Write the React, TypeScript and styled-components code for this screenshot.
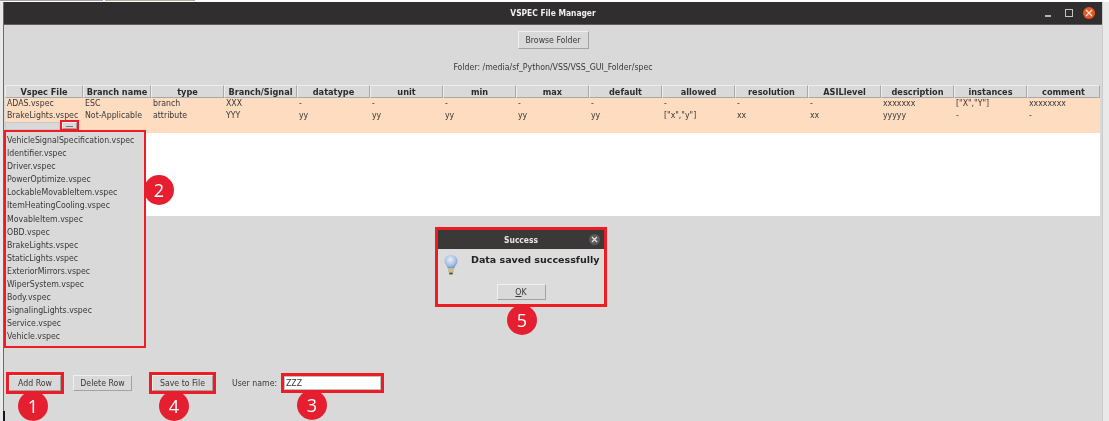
import styled, { createGlobalStyle } from 'styled-components'

const COLUMNS = [
  'Vspec File', 'Branch name', 'type', 'Branch/Signal', 'datatype', 'unit', 'min', 'max',
  'default', 'allowed', 'resolution', 'ASILlevel', 'description', 'instances', 'comment',
]

const ROWS = [
  ['ADAS.vspec', 'ESC', 'branch', 'XXX', '-', '-', '-', '-', '-', '-', '-', '-', 'xxxxxxx', '["X","Y"]', 'xxxxxxxx'],
  ['BrakeLights.vspec', 'Not-Applicable', 'attribute', 'YYY', 'yy', 'yy', 'yy', 'yy', 'yy', '["x","y"]', 'xx', 'xx', 'yyyyy', '-', '-'],
]

const FILES = [
  'VehicleSignalSpecification.vspec', 'Identifier.vspec', 'Driver.vspec', 'PowerOptimize.vspec',
  'LockableMovableItem.vspec', 'ItemHeatingCooling.vspec', 'MovableItem.vspec', 'OBD.vspec',
  'BrakeLights.vspec', 'StaticLights.vspec', 'ExteriorMirrors.vspec', 'WiperSystem.vspec',
  'Body.vspec', 'SignalingLights.vspec', 'Service.vspec', 'Vehicle.vspec',
]

const BADGES = [
  { n: 1, x: 33, y: 406 },
  { n: 2, x: 159, y: 190 },
  { n: 3, x: 312, y: 405 },
  { n: 4, x: 174, y: 406 },
  { n: 5, x: 522, y: 320 },
]

const BulbIcon = () => (
  <svg width="16" height="22" viewBox="0 0 16 22">
    <defs>
      <radialGradient id="bulb" cx="45%" cy="35%" r="65%">
        <stop offset="0%" stopColor="#e8eef8" />
        <stop offset="65%" stopColor="#a9c0e6" />
        <stop offset="100%" stopColor="#6f8fc4" />
      </radialGradient>
    </defs>
    <path d="M8 1C4 1 1.5 3.8 1.5 7c0 3 2.500 4.500 3.500 7.500h6C12 11.500 14.500 10 14.500 7 14.500 3.800 12 1 8 1z" fill="url(#bulb)" />
    <rect x="5" y="14.500" width="6" height="4" rx="1" fill="#c9c08a" />
    <rect x="6" y="18.500" width="4" height="2" rx="1" fill="#55523f" />
  </svg>
)

const App = () => (
  <Page>
    <GlobalStyle />
    <TopStrip>
      <StripTab $color="#a3a3a3" $width={103} />
      <StripTab $color="#b8a99a" $width={90} />
    </TopStrip>
    <Window>
      <TitleBar>
        <WindowTitle>VSPEC File Manager</WindowTitle>
        <WindowControls>
          <MinimizeMark />
          <MaximizeMark />
          <CloseDot>
            <svg width="8" height="8" viewBox="0 0 8 8">
              <path d="M1 1l6 6M7 1L1 7" stroke="#fbe4da" strokeWidth="1.300" />
            </svg>
          </CloseDot>
        </WindowControls>
      </TitleBar>
      <Content>
        <BrowseButton>Browse Folder</BrowseButton>
        <FolderLabel>Folder: /media/sf_Python/VSS/VSS_GUI_Folder/spec</FolderLabel>
        <TableFrame>
          <HeaderRow>
            {COLUMNS.map((c) => (
              <HeaderCell key={c}>{c}</HeaderCell>
            ))}
          </HeaderRow>
          <RowsArea>
            <PeachBlock>
              {ROWS.map((row) => (
                <DataRow key={row[0]}>
                  {row.map((v, i) => (
                    <DataCell key={i}>{v}</DataCell>
                  ))}
                </DataRow>
              ))}
              <ComboRow>
                <ComboEntry />
                <ComboMark>
                  <ComboArrow>
                    <ArrowMark />
                  </ComboArrow>
                </ComboMark>
              </ComboRow>
            </PeachBlock>
          </RowsArea>
        </TableFrame>
        <Toolbar>
          <Marked>
            <ToolButton $width={52}>Add Row</ToolButton>
          </Marked>
          <DeleteButton $width={59}>Delete Row</DeleteButton>
          <SaveMark>
            <ToolButton $width={61}>Save to File</ToolButton>
          </SaveMark>
          <UserLabel>User name:</UserLabel>
          <Marked>
            <UserInput>ZZZ</UserInput>
          </Marked>
        </Toolbar>
      </Content>
    </Window>

    <FileList>
      {FILES.map((f) => (
        <FileItem key={f}>{f}</FileItem>
      ))}
    </FileList>

    <Dialog>
      <DialogTitle>
        <span>Success</span>
        <DialogClose>
          <svg width="7" height="7" viewBox="0 0 7 7">
            <path d="M1 1l5 5M6 1L1 6" stroke="#e2e2e2" strokeWidth="1.300" />
          </svg>
        </DialogClose>
      </DialogTitle>
      <DialogBody>
        <BulbSlot>
          <BulbIcon />
        </BulbSlot>
        <DialogMessage>Data saved successfully</DialogMessage>
      </DialogBody>
      <DialogFooter>
        <OkButton>
          <u>O</u>K
        </OkButton>
      </DialogFooter>
    </Dialog>

    {BADGES.map((b) => (
      <Badge key={b.n} style={{ left: b.x - 15, top: b.y - 15 }}>
        {b.n}
      </Badge>
    ))}
  </Page>
)

const GlobalStyle = createGlobalStyle`
  html, body {
    margin: 0;
    padding: 0;
    background: #ffffff;
  }
`

const Page = styled.div`
  position: relative;
  width: 1109px;
  height: 421px;
  overflow: hidden;
  display: flex;
  flex-direction: column;
  background: linear-gradient(to bottom, #ffffff 0, #ffffff 2px, #e9e9e9 2px);
  font-family: 'DejaVu Sans Condensed', 'DejaVu Sans', sans-serif;
  font-size: 8.7px;
  color: #383838;
  filter: blur(0.35px);
`

const TopStrip = styled.div`
  display: flex;
  gap: 2px;
  height: 2px;
  flex: none;
`

const StripTab = styled.div<{ $color: string; $width: number }>`
  height: 1px;
  width: ${({ $width }) => $width}px;
  background: ${({ $color }) => $color};
`

const Window = styled.div`
  position: relative;
  flex: 1;
  min-height: 0;
  margin: 0 6px 0 3px;
  display: flex;
  flex-direction: column;
  border-left: 1px solid #6a6a6a;
  border-right: 1px solid #cacaca;
  background: #d9d9d9;

  &::after {
    content: '';
    position: absolute;
    left: -1px;
    bottom: 0;
    width: 2px;
    height: 10px;
    background: #15151f;
  }
`

const TitleBar = styled.div`
  position: relative;
  flex: none;
  height: 22px;
  display: flex;
  align-items: center;
  justify-content: center;
  background: #302e2e;
  border-bottom: 1px solid #5e5e5e;
`

const WindowTitle = styled.div`
  font-weight: 700;
  font-size: 8.4px;
  color: #f0f0f0;
`

const WindowControls = styled.div`
  position: absolute;
  right: 7px;
  top: 0;
  bottom: 0;
  display: flex;
  align-items: center;
  gap: 10px;
`

const MinimizeMark = styled.div`
  width: 6px;
  height: 2px;
  margin: 5px 4.5px 0 0;
  background: #b5b5b5;
`

const MaximizeMark = styled.div`
  width: 6px;
  height: 6px;
  border: 1.5px solid #c4c4c4;
`

const CloseDot = styled.div`
  width: 12px;
  height: 12px;
  border-radius: 50%;
  background: #e9561f;
  display: flex;
  align-items: center;
  justify-content: center;
`

const Content = styled.div`
  flex: 1;
  min-height: 0;
  display: flex;
  flex-direction: column;
  align-items: center;
`

const RaisedButton = styled.div`
  display: flex;
  align-items: center;
  justify-content: center;
  box-sizing: border-box;
  background: #d9d9d9;
  border: 1px solid;
  border-color: #f0f0f0 #a2a2a2 #a2a2a2 #f0f0f0;
  color: #383838;
  white-space: nowrap;
`

const BrowseButton = styled(RaisedButton)`
  width: 71px;
  height: 18px;
  margin-top: 6px;
`

const FolderLabel = styled.div`
  margin-top: 12px;
  height: 12px;
  line-height: 12px;
`

const TableFrame = styled.div`
  align-self: stretch;
  margin: 12px 2px 0 1px;
  height: 131px;
  display: flex;
  flex-direction: column;
`

const tableColumns = '78px 68px repeat(13, 73px)'

const HeaderRow = styled.div`
  flex: none;
  height: 13px;
  display: grid;
  grid-template-columns: ${tableColumns};
`

const HeaderCell = styled.div`
  box-sizing: border-box;
  display: flex;
  align-items: center;
  justify-content: center;
  font-weight: 700;
  font-size: 9.1px;
  color: #2c2c2c;
  white-space: nowrap;
  background: #d9d9d9;
  border: 1px solid;
  border-color: #eeeeee #a8a8a8 #a8a8a8 #eeeeee;
`

const RowsArea = styled.div`
  flex: 1;
  background: #ffffff;
  margin-right: 2px;
  width: 1095px;
`

const PeachBlock = styled.div`
  height: 35px;
  background: #fddcc0;
  display: flex;
  flex-direction: column;
`

const DataRow = styled.div`
  height: 11.7px;
  display: grid;
  grid-template-columns: ${tableColumns};
`

const DataCell = styled.div`
  padding-left: 2px;
  line-height: 11.7px;
  white-space: nowrap;
`

const ComboRow = styled.div`
  display: flex;
  align-items: flex-start;
  margin-top: -1px;
`

const ComboEntry = styled.div`
  width: 55px;
  height: 8px;
  margin-top: 2px;
  background: #d9d9d9;
  border: 1px solid #c8c8c8;
  box-sizing: border-box;
`

const ComboArrow = styled(RaisedButton)`
  width: 15px;
  height: 7px;
`

const ArrowMark = styled.div`
  width: 7px;
  height: 1px;
  margin-top: 2px;
  background: #777777;
`

const Marked = styled.div`
  flex: none;
  border: 3px solid #ee1c25;
`

const ComboMark = styled(Marked)`
  border-width: 2px;
`

const SaveMark = styled(Marked)`
  margin-left: 17px;
`

const Toolbar = styled.div`
  align-self: stretch;
  margin-top: auto;
  margin-bottom: 27px;
  padding-left: 2px;
  display: flex;
  align-items: center;
`

const ToolButton = styled(RaisedButton)<{ $width: number }>`
  width: ${({ $width }) => $width}px;
  height: 16px;
`

const DeleteButton = styled(ToolButton)`
  margin-left: 9px;
`

const UserLabel = styled.div`
  margin-left: 16px;
  width: 49px;
  white-space: nowrap;
`

const UserInput = styled.div`
  box-sizing: border-box;
  width: 97px;
  height: 14px;
  background: #ffffff;
  border: 1px solid #c0c0c0;
  padding-left: 1px;
  line-height: 12px;
`

const FileList = styled.div`
  position: absolute;
  left: 4px;
  top: 130px;
  box-sizing: border-box;
  width: 142px;
  height: 218px;
  padding: 2px 0 0 1px;
  background: #d9d9d9;
  border: 2px solid #ee1c25;
`

const FileItem = styled.div`
  height: 13.1px;
  line-height: 13.1px;
  white-space: nowrap;
`

const Dialog = styled.div`
  position: absolute;
  left: 435px;
  top: 227px;
  box-sizing: border-box;
  width: 172px;
  height: 80px;
  display: flex;
  flex-direction: column;
  background: #dcdcdc;
  border: 3px solid #ee1c25;
`

const DialogTitle = styled.div`
  position: relative;
  flex: none;
  height: 19px;
  display: flex;
  align-items: center;
  justify-content: center;
  background: #3b3937;
  color: #e8e8e8;
  font-weight: 700;
  font-size: 8.4px;
`

const DialogClose = styled.div`
  position: absolute;
  right: 4px;
  top: 4px;
  width: 11px;
  height: 11px;
  border-radius: 50%;
  background: #5c5a58;
  display: flex;
  align-items: center;
  justify-content: center;
`

const DialogBody = styled.div`
  flex: 1;
  display: flex;
  align-items: flex-start;
`

const BulbSlot = styled.div`
  margin: 5px 0 0 5px;
  width: 28px;
`

const DialogMessage = styled.div`
  margin-top: 5px;
  font-family: 'DejaVu Sans', sans-serif;
  font-weight: 700;
  font-size: 9.5px;
  color: #222222;
  white-space: nowrap;
`

const DialogFooter = styled.div`
  flex: none;
  display: flex;
  justify-content: center;
  padding-bottom: 4px;
`

const OkButton = styled(RaisedButton)`
  width: 49px;
  height: 16px;
`

const Badge = styled.div`
  position: absolute;
  width: 30px;
  height: 30px;
  border-radius: 50%;
  background: #e51f30;
  color: #ffffff;
  font-family: 'Open Sans', sans-serif;
  font-size: 18px;
  display: flex;
  align-items: center;
  justify-content: center;
`

export default App
